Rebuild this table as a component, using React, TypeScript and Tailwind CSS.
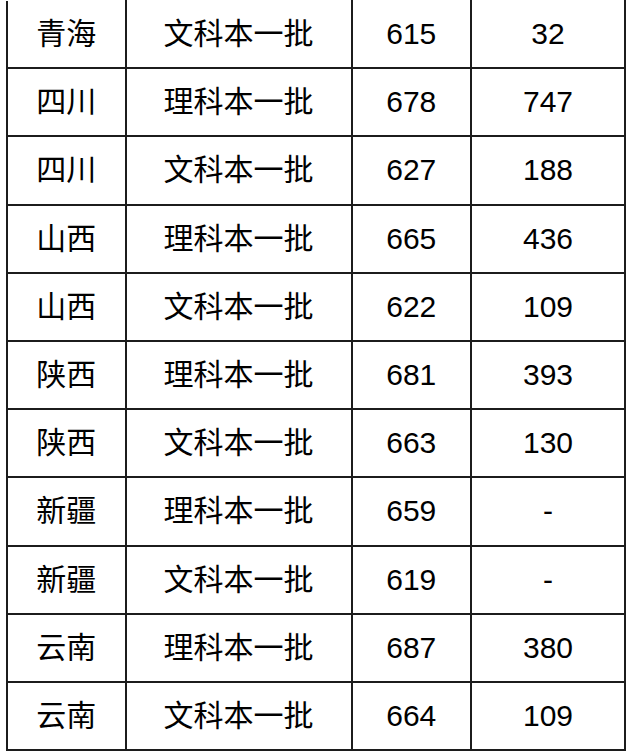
import React from 'react';

interface Row {
  province: string;
  batch: string;
  score: string;
  rank: string;
}

const rows: Row[] = [
  { province: '青海', batch: '文科本一批', score: '615', rank: '32' },
  { province: '四川', batch: '理科本一批', score: '678', rank: '747' },
  { province: '四川', batch: '文科本一批', score: '627', rank: '188' },
  { province: '山西', batch: '理科本一批', score: '665', rank: '436' },
  { province: '山西', batch: '文科本一批', score: '622', rank: '109' },
  { province: '陕西', batch: '理科本一批', score: '681', rank: '393' },
  { province: '陕西', batch: '文科本一批', score: '663', rank: '130' },
  { province: '新疆', batch: '理科本一批', score: '659', rank: '-' },
  { province: '新疆', batch: '文科本一批', score: '619', rank: '-' },
  { province: '云南', batch: '理科本一批', score: '687', rank: '380' },
  { province: '云南', batch: '文科本一批', score: '664', rank: '109' },
];

const cell = 'border-2 border-[#1c1c1c] text-center align-middle p-0';

const App: React.FC = () => {
  return (
    <div className="w-[631px] h-[752px] overflow-hidden bg-white">
      <table
        className="ml-[6px] -mt-[1px] border-collapse table-fixed text-[30px] text-black leading-none"
        style={{ fontFamily: '"Liberation Sans", "Noto Sans CJK SC", sans-serif' }}
      >
        <colgroup>
          <col className="w-[118.5px]" />
          <col className="w-[226px]" />
          <col className="w-[119.5px]" />
          <col className="w-[154px]" />
        </colgroup>
        <tbody>
          {rows.map((r, i) => {
            const c = i === 0 ? `${cell} border-t-white` : cell;
            return (
              <tr key={i} className="h-[68.2px]">
                <td className={c}>{r.province}</td>
                <td className={c}>{r.batch}</td>
                <td className={c}>{r.score}</td>
                <td className={c}>{r.rank}</td>
              </tr>
            );
          })}
        </tbody>
      </table>
    </div>
  );
};

export default App;
